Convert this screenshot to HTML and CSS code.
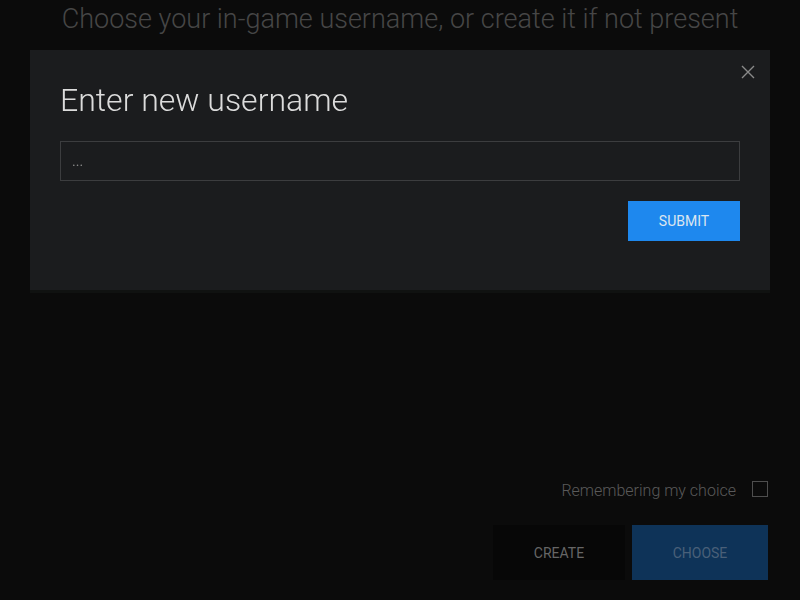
FILE: index.html
```html
<!DOCTYPE html>
<html>
<head>
<meta charset="utf-8">
<link rel="stylesheet" href="styles.css">
</head>
<body>
<div class="page">
  <h1 class="heading">Choose your in-game username, or create it if not present</h1>
  <div class="spacer"></div>
  <div class="footer">
    <label class="remember">
      <span class="remember-text">Remembering my choice</span>
      <span class="checkbox"></span>
    </label>
    <div class="actions">
      <button class="btn btn-create">CREATE</button>
      <button class="btn btn-choose">CHOOSE</button>
    </div>
  </div>
</div>
<div class="overlay">
  <div class="modal">
    <button class="close" aria-label="Close">
      <svg width="14" height="14" viewBox="0 0 14 14"><path d="M1 1L13 13M13 1L1 13" stroke="#8a8a8a" stroke-width="1.4" fill="none"/></svg>
    </button>
    <h2 class="modal-title">Enter new username</h2>
    <input class="field" type="text" placeholder="...">
    <div class="modal-actions">
      <button class="submit">SUBMIT</button>
    </div>
  </div>
</div>
</body>
</html>
```

FILE: styles.css
```css
* { box-sizing: border-box; }
html, body {
  margin: 0;
  width: 800px;
  height: 600px;
  background: #0b0b0b;
  font-family: Roboto, "Liberation Sans", sans-serif;
  overflow: hidden;
}
.page {
  height: 600px;
  display: flex;
  flex-direction: column;
  padding: 0 32px 20px 32px;
}
.heading {
  margin: 0;
  padding-top: 2px;
  text-align: center;
  font-weight: 300;
  font-size: 27px;
  line-height: 34px;
  color: #464646;
}
.spacer { flex: 1; }
.footer {
  display: flex;
  flex-direction: column;
  align-items: flex-end;
}
.remember {
  display: flex;
  align-items: center;
  gap: 16px;
}
.remember-text {
  font-size: 16px;
  font-weight: 300;
  color: #5a5a5a;
  padding-top: 3px;
}
.checkbox {
  width: 16px;
  height: 16px;
  border: 1.5px solid #4e4e4e;
}
.actions {
  display: flex;
  gap: 7px;
  margin-top: 25px;
}
.btn {
  border: none;
  height: 55px;
  font-family: Roboto, "Liberation Sans", sans-serif;
  font-size: 14px;
  padding: 0;
}
.btn-create {
  width: 132px;
  background: #070707;
  color: #666666;
}
.btn-choose {
  width: 136px;
  background: #0e3358;
  color: #4a6078;
}
.overlay {
  position: fixed;
  inset: 0;
  padding: 50px 30px 0 30px;
}
.modal {
  position: relative;
  background: #1b1c1e;
  padding: 31px 30px 49px 30px;
  box-shadow: 0 3px 0 #101211;
}
.close {
  position: absolute;
  right: 15px;
  top: 15px;
  width: 14px;
  height: 14px;
  padding: 0;
  border: none;
  background: none;
  display: flex;
}
.modal-title {
  margin: 0;
  font-weight: 300;
  font-size: 32px;
  line-height: 38px;
  color: #dcdcdc;
}
.field {
  display: block;
  width: 100%;
  height: 40px;
  margin-top: 22px;
  background: #1b1c1e;
  border: 1px solid #3c3d3f;
  padding: 0 11px;
  font-family: Roboto, "Liberation Sans", sans-serif;
  font-size: 14px;
  color: #cccccc;
  outline: none;
}
.field::placeholder { color: #8a8a8a; }
.modal-actions {
  display: flex;
  justify-content: flex-end;
  margin-top: 20px;
}
.submit {
  width: 112px;
  height: 40px;
  border: none;
  background: #1e88ee;
  color: #dce6f0;
  font-family: Roboto, "Liberation Sans", sans-serif;
  font-size: 14px;
  padding: 0;
}
```
